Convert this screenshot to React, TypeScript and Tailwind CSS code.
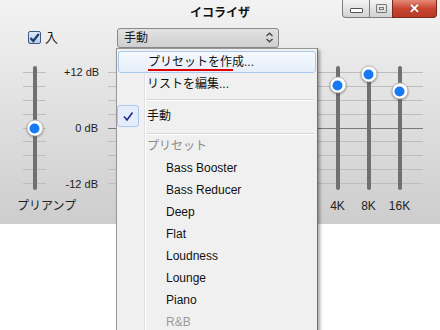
import React from "react";

const FONT = { fontFamily: '"Liberation Sans", "Noto Sans CJK JP", sans-serif' };

const TICKS = [0, 1, 2, 3, 4, 5, 6, 7, 8];
// hidden bands sit behind the preset menu, only 4K / 8K / 16K show
const BANDS: { label: string; top: number; wide: boolean }[] = [
    { label: "32", top: 40, wide: false },
    { label: "64", top: 40, wide: false },
    { label: "125", top: 40, wide: false },
    { label: "250", top: 40, wide: false },
    { label: "500", top: 40, wide: false },
    { label: "1K", top: 40, wide: false },
    { label: "2K", top: 30, wide: false },
    { label: "4K", top: 19, wide: true },
    { label: "8K", top: 8, wide: true },
    { label: "16K", top: 25, wide: true },
];

function Thumb({ top }: { top: number }) {
    return (
        <div
            className="absolute left-1/2 flex h-[17px] w-[17px] -translate-x-1/2 -translate-y-1/2 items-center justify-center rounded-full border border-[#b9b9b9] bg-white shadow-[0_1px_2px_rgba(0,0,0,0.35)]"
            style={{ top }}
        >
            <div className="h-[10px] w-[10px] rounded-full bg-[#1879f4]" />
        </div>
    );
}

function Track({ thumb }: { thumb: number }) {
    return (
        <div className="relative h-[124px] w-[17px]">
            <div className="absolute left-1/2 top-0 h-full w-[4px] -translate-x-1/2 rounded-full bg-[#707070]" />
            <Thumb top={thumb} />
        </div>
    );
}

function TickLines({ zeroDark }: { zeroDark?: boolean }) {
    return (
        <div className="absolute inset-x-0 top-[6px] flex h-[112px] flex-col justify-between">
            {TICKS.map((i) => (
                <div
                    key={i}
                    className={`h-px w-full ${i === 4 && zeroDark ? "bg-[#7a7a7a]" : "bg-[#bdbdbd]"}`}
                />
            ))}
        </div>
    );
}

function WindowButtons() {
    return (
        <div className="flex h-[18px] items-stretch pr-[3px]">
            <div className="flex w-[28px] items-center justify-center rounded-bl-[4px] border border-t-0 border-[#7d7d7d] bg-gradient-to-b from-[#f4f4f4] to-[#d2d2d2]">
                <div className="mt-[3px] h-[5px] w-[13px] rounded-[1px] border border-[#555] bg-white" />
            </div>
            <div className="flex w-[22px] items-center justify-center border-b border-[#7d7d7d] bg-gradient-to-b from-[#f4f4f4] to-[#d2d2d2]">
                <div className="flex h-[9px] w-[11px] items-center justify-center rounded-[1px] border border-[#777]">
                    <div className="h-[3px] w-[5px] border border-[#777]" />
                </div>
            </div>
            <div className="flex w-[45px] items-center justify-center rounded-br-[4px] border border-t-0 border-[#7a2a20] bg-gradient-to-b from-[#e58a78] via-[#c9452f] to-[#b73a26]">
                <span className="text-[13px] font-bold leading-none text-white [text-shadow:0_0_1px_#5a1a10]">✕</span>
            </div>
        </div>
    );
}

function MenuItem({
    children,
    indent,
    gray,
    faded,
}: {
    children: React.ReactNode;
    indent?: boolean;
    gray?: boolean;
    faded?: boolean;
}) {
    return (
        <div
            className={`flex h-[22px] items-center whitespace-nowrap text-[12px] ${indent ? "pl-[49px]" : "pl-[30px]"} ${
                gray ? "text-[#8a8a8a]" : faded ? "text-[#9a9a9a]" : "text-[#111]"
            }`}
        >
            {children}
        </div>
    );
}

export default function App() {
    return (
        <div className="relative h-[330px] w-[440px] overflow-hidden bg-white text-[#1a1a1a]" style={FONT}>
            <div className="h-[224px] bg-gradient-to-b from-[#f3f3f3] to-[#cdcdcd]">
                <div className="grid h-[27px] grid-cols-[1fr_auto_1fr] items-start">
                    <div />
                    <div className="pt-[5px] text-[12px] font-bold leading-[16px] text-[#111]">イコライザ</div>
                    <div className="flex justify-end">
                        <WindowButtons />
                    </div>
                </div>

                <div className="flex h-[21px] items-center pl-[28px]">
                    <div className="flex h-[13px] w-[13px] items-center justify-center rounded-[2px] border border-[#3d5a86] bg-gradient-to-b from-[#dfe9f7] to-[#b8cbe6]">
                        <svg width="11" height="10" viewBox="0 0 11 10">
                            <path d="M1.5 5 L4.3 8 L9.8 1" fill="none" stroke="#1c3a6e" strokeWidth="2.2" />
                        </svg>
                    </div>
                    <span className="ml-[4px] text-[13px] leading-none">入</span>
                    <div className="ml-[59px] flex h-[20px] w-[162px] items-center justify-between rounded-[3px] border border-[#8a8a8a] bg-gradient-to-b from-[#e2e2e2] to-[#cfcfcf] pl-[6px] pr-[4px]">
                        <span className="text-[12px] leading-none">手動</span>
                        <svg width="9" height="11" viewBox="0 0 9 11">
                            <path d="M1.5 4 L4.5 1.2 L7.5 4 M1.5 7 L4.5 9.8 L7.5 7" fill="none" stroke="#444" strokeWidth="1.3" />
                        </svg>
                    </div>
                </div>

                <div className="mt-[18px] flex items-start">
                    <div className="ml-[17px] flex w-[47px] flex-col">
                        <div className="relative ml-[6px] w-[23px]">
                            <TickLines />
                            <div className="relative flex justify-center">
                                <Track thumb={62} />
                            </div>
                        </div>
                        <div className="mt-[9px] whitespace-nowrap text-[12px] leading-[14px] text-[#222]">プリアンプ</div>
                    </div>
                    <div className="flex h-[124px] w-[34px] flex-col justify-between whitespace-nowrap text-right text-[11px] leading-[12px] text-[#222]">
                        <span>+12 dB</span>
                        <span>0 dB</span>
                        <span>-12 dB</span>
                    </div>
                    <div className="relative ml-[8px] flex pl-[20px]">
                        <div className="absolute left-[2px] right-[-8px] top-0 h-[124px]">
                            <TickLines zeroDark />
                        </div>
                        {BANDS.map((b) => (
                            <div
                                key={b.label}
                                className={`relative flex flex-col items-center ${b.wide ? "w-[31px]" : "w-[28px]"}`}
                            >
                                <Track thumb={b.top} />
                                <div className="mt-[9px] h-[14px] whitespace-nowrap text-[12px] leading-[14px] text-[#222]">
                                    {b.wide ? b.label : null}
                                </div>
                            </div>
                        ))}
                    </div>
                </div>
            </div>

            <div className="absolute left-[116px] top-[48px] h-[300px] w-[202px] border border-[#979797] border-r-[#6f6f6f] bg-[#f0f0f0] shadow-[2px_2px_3px_rgba(0,0,0,0.35)]">
                <div className="absolute bottom-0 left-[27px] top-0 w-[2px] border-l border-[#e0e0e0] bg-white" />
                <div className="relative pt-[2px]">
                    <div className="mx-[1px] rounded-[3px] border border-[#a9c9ee] bg-gradient-to-b from-[#f5f9fe] to-[#e6eefa]">
                        <div className="relative flex h-[20px] items-center whitespace-nowrap pl-[29px] text-[12px] text-[#111]">
                            プリセットを作成...
                            <div className="absolute left-[29px] top-[17px] h-[2px] w-[85px] bg-[#e30000]" />
                        </div>
                    </div>
                    <MenuItem>リストを編集...</MenuItem>
                    <div className="ml-[29px] mr-[3px] mt-[4px] h-[2px] border-t border-[#d8d8d8] bg-white" />
                    <div className="relative mt-[4px] flex h-[22px] items-center">
                        <div className="flex h-[22px] w-[22px] items-center justify-center rounded-[3px] border border-[#a9c9ee] bg-[#e4edf9]">
                            <svg width="12" height="11" viewBox="0 0 12 11">
                                <path d="M2 5.5 L5 9 L10.5 1.5" fill="none" stroke="#1b2a8a" strokeWidth="1.6" />
                            </svg>
                        </div>
                        <span className="ml-[8px] text-[12px] text-[#111]">手動</span>
                    </div>
                    <div className="ml-[29px] mr-[3px] mt-[6px] h-[2px] border-t border-[#d8d8d8] bg-white" />
                    <MenuItem gray>プリセット</MenuItem>
                    <MenuItem indent>Bass Booster</MenuItem>
                    <MenuItem indent>Bass Reducer</MenuItem>
                    <MenuItem indent>Deep</MenuItem>
                    <MenuItem indent>Flat</MenuItem>
                    <MenuItem indent>Loudness</MenuItem>
                    <MenuItem indent>Lounge</MenuItem>
                    <MenuItem indent>Piano</MenuItem>
                    <MenuItem indent faded>R&amp;B</MenuItem>
                </div>
            </div>
        </div>
    );
}
